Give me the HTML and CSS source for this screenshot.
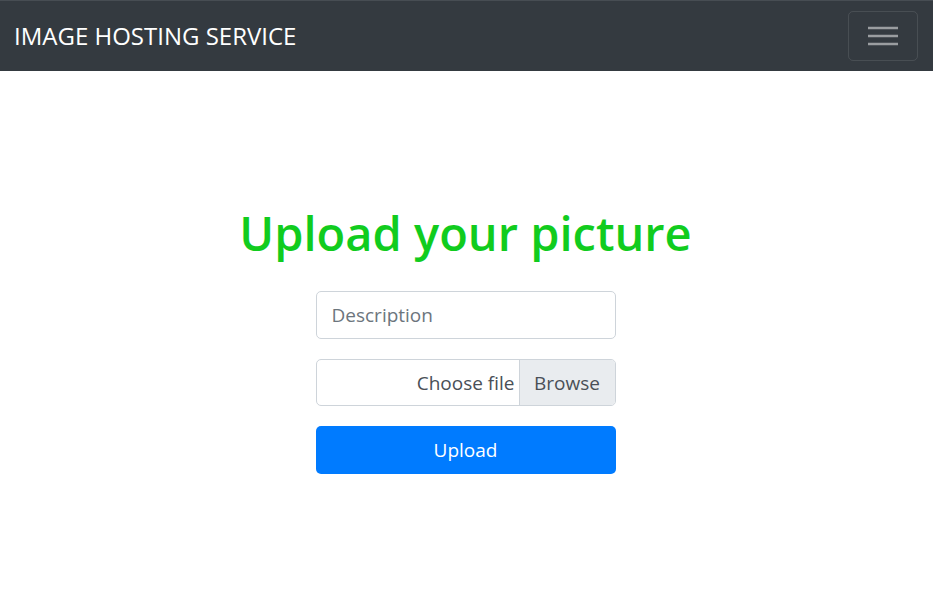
FILE: index.html
```html
<!DOCTYPE html>
<html lang="en">
<head>
<meta charset="utf-8">
<title>Image Hosting Service</title>
<link rel="stylesheet" href="styles.css">
</head>
<body>
<nav class="navbar">
  <a class="brand" href="#">IMAGE HOSTING SERVICE</a>
  <button class="toggler" type="button" aria-label="Toggle navigation">
    <svg width="30" height="30" viewBox="0 0 30 30" aria-hidden="true">
      <path d="M0 7h30M0 15h30M0 23h30" stroke="rgba(255,255,255,0.5)" stroke-width="2.4" fill="none"/>
    </svg>
  </button>
</nav>
<main class="main">
  <h1 class="title">Upload your picture</h1>
  <form class="form">
    <input class="control" type="text" placeholder="Description">
    <div class="file">
      <span class="file-label">Choose file</span>
      <span class="file-btn">Browse</span>
    </div>
    <button class="upload" type="button">Upload</button>
  </form>
</main>
</body>
</html>
```
FILE: styles.css
```css
* { box-sizing: border-box; }
html, body { margin: 0; padding: 0; }
body {
  font-family: "Open Sans", "Noto Sans", sans-serif;
  color: #212529;
  background: #fff;
}
.navbar {
  height: 71px;
  background: #343a40;
  border-top: 1px solid #474d53;
  display: flex;
  align-items: center;
  justify-content: space-between;
  padding: 0 15px 0 14px;
}
.brand {
  color: #fff;
  text-decoration: none;
  font-size: 24px;
  line-height: 1;
}
.toggler {
  width: 70px;
  height: 50px;
  margin-top: -1px;
  background: transparent;
  border: 1px solid rgba(255,255,255,0.1);
  border-radius: 5px;
  display: flex;
  align-items: center;
  justify-content: center;
  padding: 0;
}
.main {
  display: flex;
  flex-direction: column;
  align-items: center;
  padding: 134px 2px 0 0;
}
.title {
  margin: 0 0 30px;
  color: #11cc1e;
  font-size: 47px;
  font-weight: 600;
  line-height: 1.2;
}
.form {
  width: 300px;
  display: flex;
  flex-direction: column;
  gap: 20px;
}
.control {
  height: 48px;
  width: 100%;
  border: 1px solid #ced4da;
  border-radius: 5px;
  padding: 0 15px;
  font-family: inherit;
  font-size: 19px;
  color: #495057;
}
.control::placeholder { color: #6c757d; }
.file {
  height: 47px;
  border: 1px solid #ced4da;
  border-radius: 5px;
  display: flex;
  overflow: hidden;
  font-size: 19px;
  color: #495057;
}
.file-label {
  flex: 1;
  display: flex;
  align-items: center;
  justify-content: flex-end;
  padding-right: 4px;
}
.file-btn {
  width: 96px;
  background: #e9ecef;
  border-left: 1px solid #ced4da;
  display: flex;
  align-items: center;
  justify-content: center;
}
.upload {
  height: 48px;
  border: 0;
  border-radius: 5px;
  background: #007bff;
  color: #fff;
  font-family: inherit;
  font-size: 19px;
}
```
